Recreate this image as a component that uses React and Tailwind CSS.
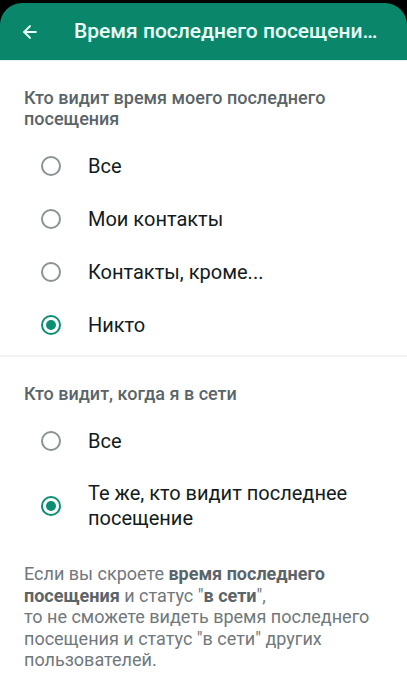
import { ArrowLeft } from 'lucide-react'

const lastSeen = ['Все', 'Мои контакты', 'Контакты, кроме...', 'Никто']

function Radio({ checked }) {
  return checked ? (
    <span className="w-[20px] h-[20px] rounded-full border-2 border-[#0a8f72] flex items-center justify-center shrink-0">
      <span className="w-[10px] h-[10px] rounded-full bg-[#0a8f72]" />
    </span>
  ) : (
    <span className="w-[20px] h-[20px] rounded-full border-2 border-[#8a9296] shrink-0" />
  )
}

function Option({ label, checked }) {
  return (
    <div className="h-[53px] flex items-center pl-[41px] pr-6">
      <Radio checked={checked} />
      <span className="ml-[27px] text-[20px] text-[#121b20]">{label}</span>
    </div>
  )
}

export default function App() {
  return (
    <div className="w-[407px] h-[679px] overflow-hidden bg-white font-['Roboto',sans-serif]">
      <div className="bg-black pt-[3px]">
        <div className="h-[57px] rounded-t-[22px] bg-[#0a866b] flex items-center px-5">
          <ArrowLeft className="w-[20px] h-[20px] text-[#eafff8]" strokeWidth={2.4} />
          <h1 className="ml-[34px] text-[21px] font-medium text-[#eafff8] whitespace-nowrap">
            Время последнего посещени…
          </h1>
        </div>
      </div>
      <div className="h-px bg-[#e3f5f1]" />

      <section className="pt-[26px]">
        <h2 className="pl-6 pr-16 text-[18px] leading-[21px] font-medium text-[#5b6468]">
          Кто видит время моего последнего посещения
        </h2>
        <div className="mt-[10px]">
          {lastSeen.map((label) => (
            <Option key={label} label={label} checked={label === 'Никто'} />
          ))}
        </div>
      </section>

      <div className="mt-[4px] h-[2px] bg-[#f3f3f3]" />

      <section className="pt-[26px]">
        <h2 className="px-6 text-[18px] leading-[21px] font-medium text-[#5b6468]">
          Кто видит, когда я в сети
        </h2>
        <div className="mt-[10px]">
          <Option label="Все" />
          <div className="flex items-center pl-[41px] pr-6 py-[14px]">
            <Radio checked />
            <span className="ml-[27px] text-[20px] leading-[25px] text-[#121b20]">
              Те же, кто видит последнее посещение
            </span>
          </div>
        </div>
      </section>

      <p className="mt-[18px] pl-6 pr-5 text-[18px] leading-[21.5px] text-[#70787c]">
        Если вы скроете <b className="font-bold text-[#5b6468]">время последнего посещения</b> и статус "
        <b className="font-bold text-[#5b6468]">в сети</b>",
        <br />
        то не сможете видеть время последнего посещения и статус "в сети" других пользователей.
      </p>
    </div>
  )
}
